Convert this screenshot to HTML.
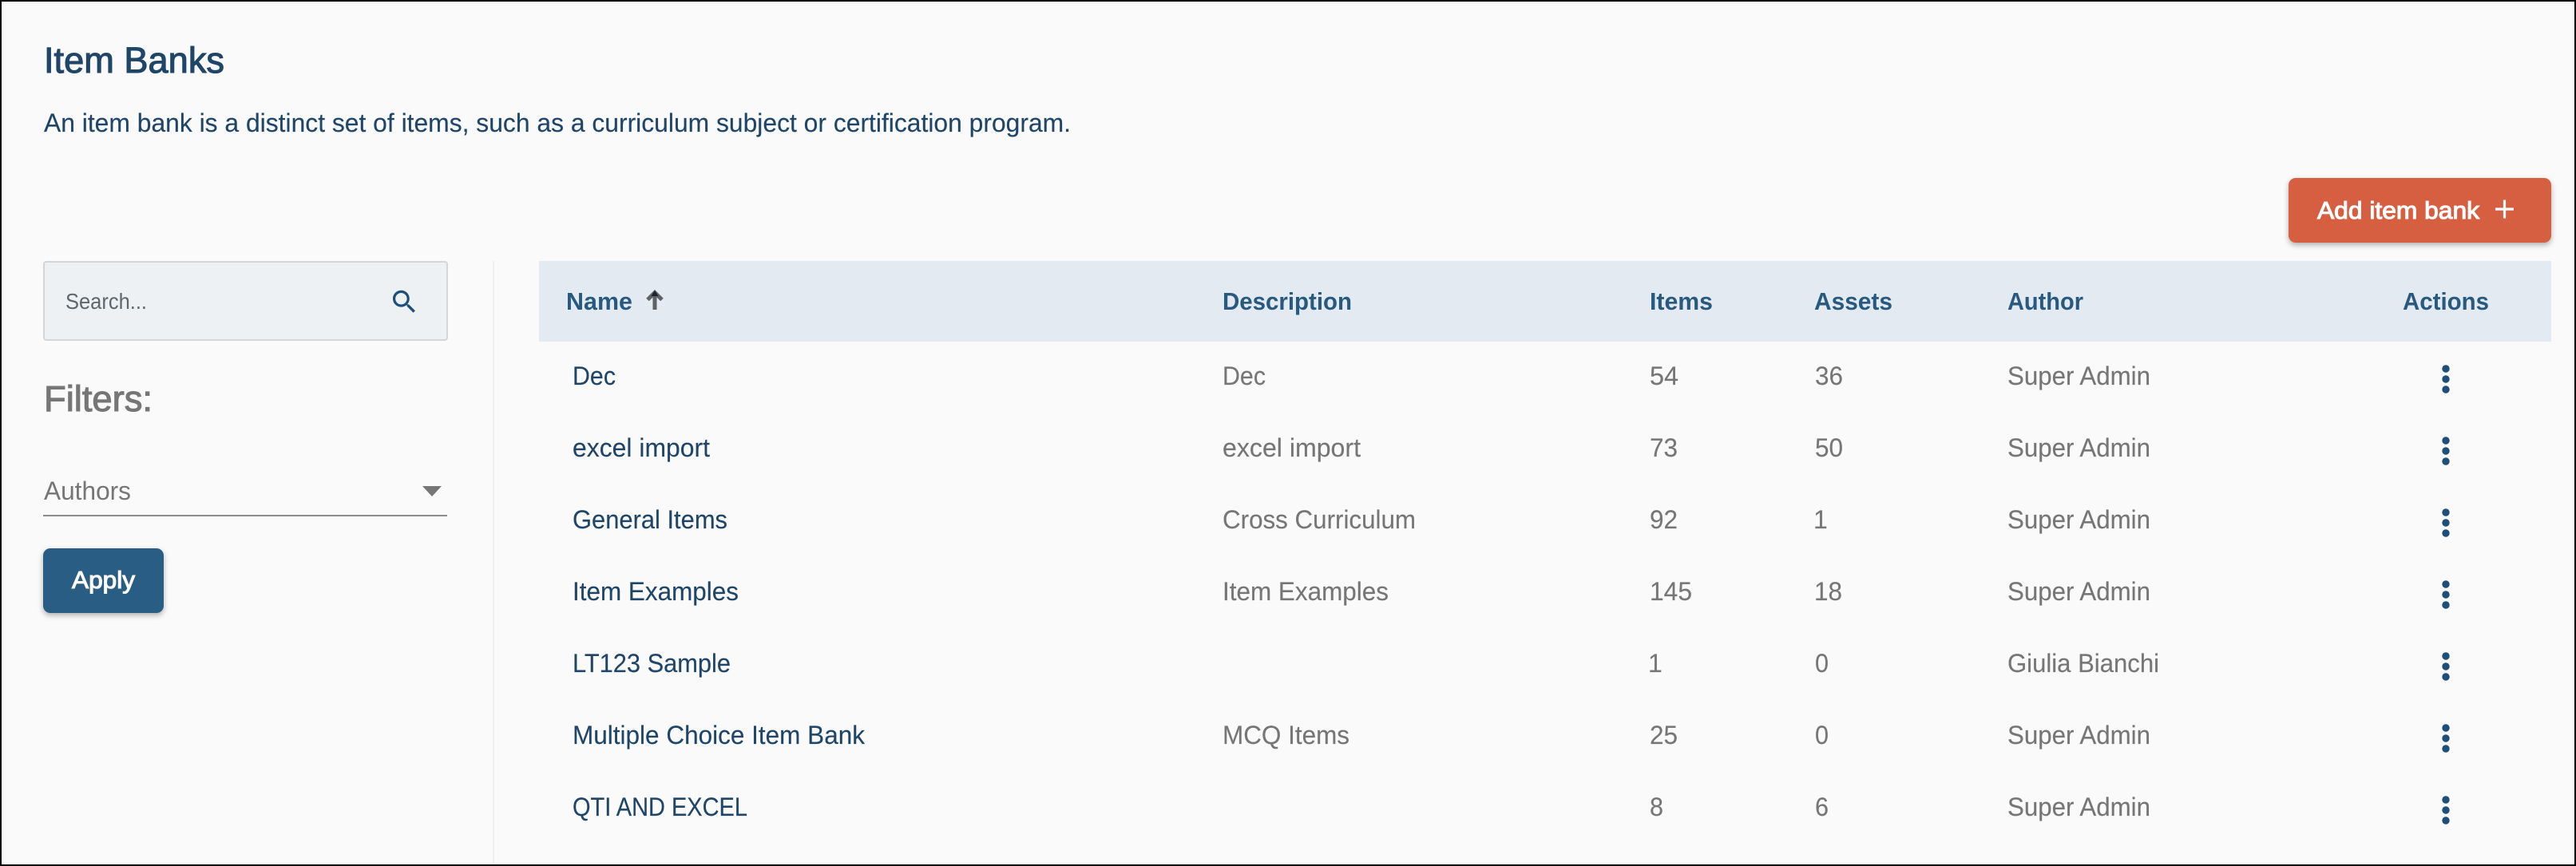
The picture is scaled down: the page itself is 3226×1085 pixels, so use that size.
<!DOCTYPE html>
<html lang="en">
<head>
<meta charset="utf-8">
<title>Item Banks</title>
<style>
html,body{margin:0;padding:0;background:#000;}
body{width:3226px;height:1085px;overflow:hidden;}
svg{display:block;}
text{font-family:"Liberation Sans",Arimo,sans-serif;white-space:pre;}
.n{font-size:32px;fill:#1f4568;stroke:#1f4568;stroke-width:.15px;}
.g{font-size:32px;fill:#767676;stroke:#767676;stroke-width:.15px;}
.h{font-size:31px;font-weight:700;fill:#28597f;}
</style>
</head>
<body>
<svg width="3226" height="1085" viewBox="0 0 3226 1085" xmlns="http://www.w3.org/2000/svg">
<defs>
<filter id="s" x="-10%" y="-20%" width="120%" height="150%">
<feDropShadow dx="0" dy="3" stdDeviation="3.5" flood-color="#000" flood-opacity=".3"/>
</filter>
<g id="d" fill="#1f4f78"><circle cx="3063" cy="462" r="4.700"/><circle cx="3063" cy="475" r="4.700"/><circle cx="3063" cy="488" r="4.700"/></g>
</defs>
<rect x="0" y="0" width="3226" height="1085" fill="#000"/>
<rect x="2" y="2" width="3222" height="1081" fill="#fafafa"/>

<text x="55" y="91" font-size="45" fill="#1f4568" stroke="#1f4568" stroke-width="1.100" textLength="226" lengthAdjust="spacingAndGlyphs">Item Banks</text>
<text x="55" y="165" font-size="32" fill="#1f4568" stroke="#1f4568" stroke-width=".15" textLength="1286" lengthAdjust="spacingAndGlyphs">An item bank is a distinct set of items, such as a curriculum subject or certification program.</text>

<rect x="2866" y="223" width="329" height="81" rx="9" fill="#d65f42" filter="url(#s)"/>
<text x="2902" y="274" font-size="31" fill="#fff" stroke="#fff" stroke-width="1.100" textLength="203" lengthAdjust="spacingAndGlyphs">Add item bank</text>
<path d="M3125 262H3148M3136.500 250.500V273.500" stroke="#fff" stroke-width="3.200" fill="none"/>

<rect x="55" y="328" width="505" height="98" rx="3" fill="#eef1f3" stroke="#d3d6d8" stroke-width="2"/>
<text x="82" y="387" font-size="28" fill="#5f666c" textLength="102" lengthAdjust="spacingAndGlyphs">Search...</text>
<g transform="translate(487.200 359) scale(1.600)"><path fill="#1f4f78" d="M15.500 14h-.79l-.28-.27C15.410 12.590 16 11.110 16 9.500 16 5.910 13.090 3 9.500 3S3 5.910 3 9.500 5.910 16 9.500 16c1.610 0 3.090-.59 4.230-1.570l.27.28v.79l5 4.990L20.490 19l-4.990-5zm-6 0C7.010 14 5 11.990 5 9.500S7.010 5 9.500 5 14 7.010 14 9.500 11.990 14 9.500 14z"/></g>

<text x="55" y="515" font-size="45" fill="#767676" stroke="#767676" stroke-width="1.100" textLength="136" lengthAdjust="spacingAndGlyphs">Filters:</text>
<text x="55" y="626" font-size="32" fill="#767676" textLength="109" lengthAdjust="spacingAndGlyphs">Authors</text>
<path d="M529 609H553L541 622Z" fill="#767676"/>
<rect x="54" y="645" width="506" height="2" fill="#8c8c8c"/>

<rect x="54" y="687" width="151" height="81" rx="9" fill="#2a5d84" filter="url(#s)"/>
<text x="90" y="737" font-size="31" fill="#fff" stroke="#fff" stroke-width="1.100" textLength="79" lengthAdjust="spacingAndGlyphs">Apply</text>

<rect x="617" y="327" width="2" height="756" fill="#efefef"/>

<rect x="675" y="327" width="2520" height="101" fill="#e4eaf1"/>
<text class="h" x="709" y="388" textLength="83" lengthAdjust="spacingAndGlyphs">Name</text>
<path d="M820 388V367M811 375.500L820 366.500L829 375.500" fill="none" stroke="#5c6266" stroke-width="5"/>
<path d="M815.500 371L820 364L824.500 371Z" fill="#1b2430"/>
<text class="h" x="1531" y="388" textLength="162" lengthAdjust="spacingAndGlyphs">Description</text>
<text class="h" x="2066" y="388" textLength="79" lengthAdjust="spacingAndGlyphs">Items</text>
<text class="h" x="2272" y="388" textLength="98" lengthAdjust="spacingAndGlyphs">Assets</text>
<text class="h" x="2514" y="388" textLength="95" lengthAdjust="spacingAndGlyphs">Author</text>
<text class="h" x="3009" y="388" textLength="108" lengthAdjust="spacingAndGlyphs">Actions</text>

<text class="n" x="717" y="482" textLength="54" lengthAdjust="spacingAndGlyphs">Dec</text>
<text class="g" x="1531" y="482" textLength="54" lengthAdjust="spacingAndGlyphs">Dec</text>
<text class="g" x="2066" y="482" textLength="36" lengthAdjust="spacingAndGlyphs">54</text>
<text class="g" x="2273" y="482" textLength="35" lengthAdjust="spacingAndGlyphs">36</text>
<text class="g" x="2514" y="482" textLength="179" lengthAdjust="spacingAndGlyphs">Super Admin</text>
<use href="#d"/>

<text class="n" x="717" y="572" textLength="172" lengthAdjust="spacingAndGlyphs">excel import</text>
<text class="g" x="1531" y="572" textLength="173" lengthAdjust="spacingAndGlyphs">excel import</text>
<text class="g" x="2066" y="572" textLength="35" lengthAdjust="spacingAndGlyphs">73</text>
<text class="g" x="2273" y="572" textLength="35" lengthAdjust="spacingAndGlyphs">50</text>
<text class="g" x="2514" y="572" textLength="179" lengthAdjust="spacingAndGlyphs">Super Admin</text>
<use href="#d" y="90"/>

<text class="n" x="717" y="662" textLength="194" lengthAdjust="spacingAndGlyphs">General Items</text>
<text class="g" x="1531" y="662" textLength="242" lengthAdjust="spacingAndGlyphs">Cross Curriculum</text>
<text class="g" x="2066" y="662" textLength="35" lengthAdjust="spacingAndGlyphs">92</text>
<text class="g" x="2271" y="662">1</text>
<text class="g" x="2514" y="662" textLength="179" lengthAdjust="spacingAndGlyphs">Super Admin</text>
<use href="#d" y="180"/>

<text class="n" x="717" y="752" textLength="208" lengthAdjust="spacingAndGlyphs">Item Examples</text>
<text class="g" x="1531" y="752" textLength="208" lengthAdjust="spacingAndGlyphs">Item Examples</text>
<text class="g" x="2066" y="752" textLength="53" lengthAdjust="spacingAndGlyphs">145</text>
<text class="g" x="2272" y="752" textLength="35" lengthAdjust="spacingAndGlyphs">18</text>
<text class="g" x="2514" y="752" textLength="179" lengthAdjust="spacingAndGlyphs">Super Admin</text>
<use href="#d" y="270"/>

<text class="n" x="717" y="842" textLength="198" lengthAdjust="spacingAndGlyphs">LT123 Sample</text>
<text class="g" x="2064" y="842">1</text>
<text class="g" x="2273" y="842" textLength="17" lengthAdjust="spacingAndGlyphs">0</text>
<text class="g" x="2514" y="842" textLength="190" lengthAdjust="spacingAndGlyphs">Giulia Bianchi</text>
<use href="#d" y="360"/>

<text class="n" x="717" y="932" textLength="366" lengthAdjust="spacingAndGlyphs">Multiple Choice Item Bank</text>
<text class="g" x="1531" y="932" textLength="159" lengthAdjust="spacingAndGlyphs">MCQ Items</text>
<text class="g" x="2066" y="932" textLength="35" lengthAdjust="spacingAndGlyphs">25</text>
<text class="g" x="2273" y="932" textLength="17" lengthAdjust="spacingAndGlyphs">0</text>
<text class="g" x="2514" y="932" textLength="179" lengthAdjust="spacingAndGlyphs">Super Admin</text>
<use href="#d" y="450"/>

<text class="n" x="717" y="1022" textLength="219" lengthAdjust="spacingAndGlyphs">QTI AND EXCEL</text>
<text class="g" x="2066" y="1022" textLength="17" lengthAdjust="spacingAndGlyphs">8</text>
<text class="g" x="2273" y="1022" textLength="17" lengthAdjust="spacingAndGlyphs">6</text>
<text class="g" x="2514" y="1022" textLength="179" lengthAdjust="spacingAndGlyphs">Super Admin</text>
<use href="#d" y="540"/>
</svg>
</body>
</html>
